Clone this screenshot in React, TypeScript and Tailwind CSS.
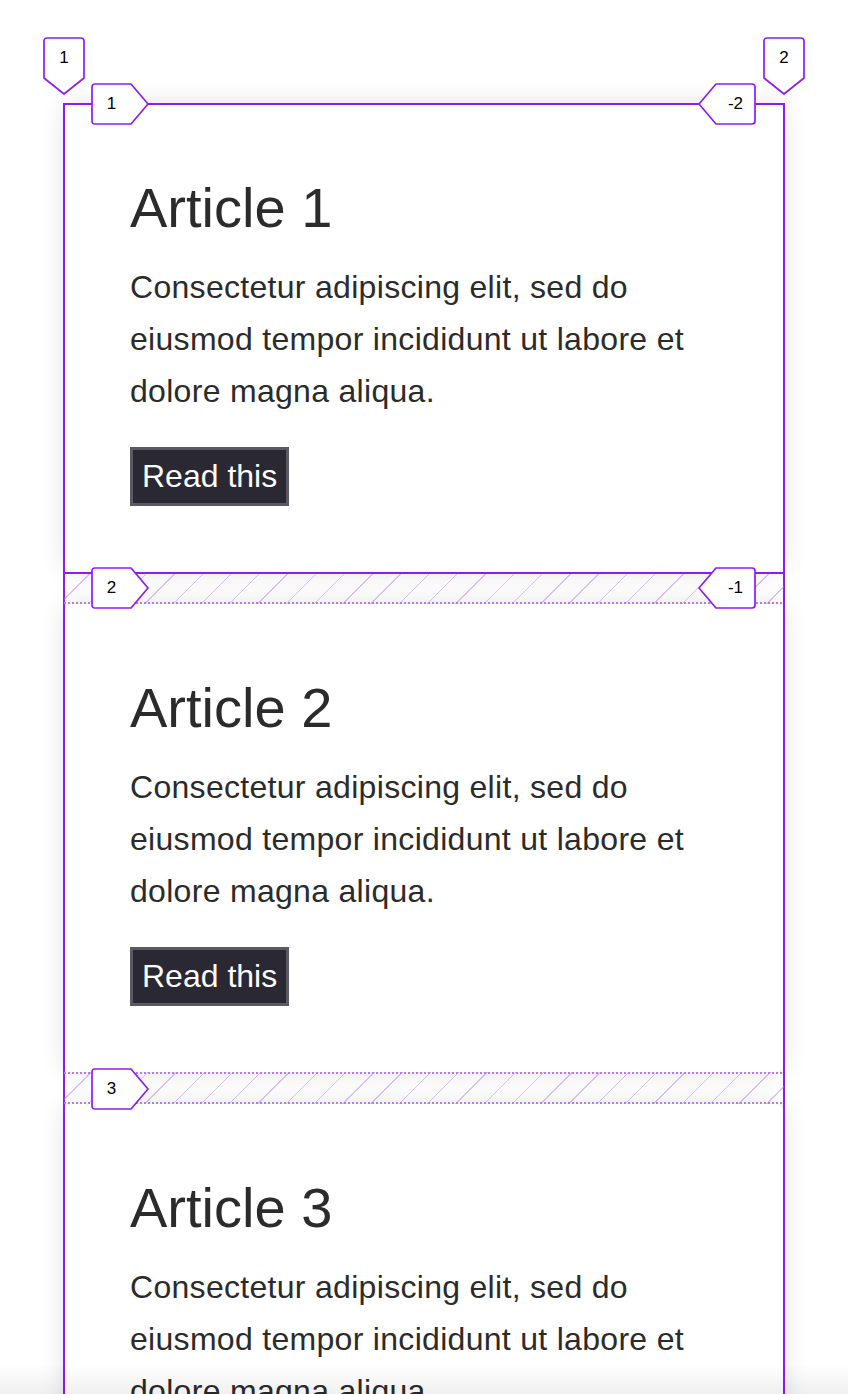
const purple = '#8a1ef2'

const articles = [1, 2, 3]

const Card = ({ n }: { n: number }) => {
  return (
    <div className="bg-white rounded-[10px] shadow-[0_0_24px_rgba(0,0,0,0.12)] h-[468px] pt-[72px] px-[66px] text-[#2b2b2b]">
      <h2 className="text-[56px] leading-[64px]">Article {n}</h2>
      <p className="mt-[21px] text-[32px] leading-[52px] tracking-[0.3px]">
        Consectetur adipiscing elit, sed do eiusmod tempor incididunt ut labore et dolore magna aliqua.
      </p>
      <button className="mt-[30px] bg-[#2a2832] border-[3px] border-[#5b5a63] px-[9px] py-[8px] text-[32px] leading-[37px] text-white">
        Read this
      </button>
    </div>
  )
}

type Dir = 'down' | 'right' | 'left'

const shapes: Record<Dir, { w: number; h: number; d: string; text: string }> = {
  down: { w: 42, h: 58, d: 'M4 1H38Q41 1 41 4V41L21 57L1 41V4Q1 1 4 1Z', text: 'left-0 top-0 w-[42px] h-[41px]' },
  right: { w: 58, h: 42, d: 'M4 1H40L57 21L40 41H4Q1 41 1 38V4Q1 1 4 1Z', text: 'left-0 top-0 w-[41px] h-[42px]' },
  left: { w: 58, h: 42, d: 'M18 1H54Q57 1 57 4V38Q57 41 54 41H18L1 21Z', text: 'left-[17px] top-0 w-[41px] h-[42px]' },
}

const Label = ({ dir, label, className }: { dir: Dir; label: string; className: string }) => {
  const s = shapes[dir]
  return (
    <div className={`absolute ${className}`}>
      <svg width={s.w} height={s.h} viewBox={`0 0 ${s.w} ${s.h}`} className="block">
        <path d={s.d} fill="white" stroke={purple} strokeWidth="1.7" strokeLinejoin="round" />
      </svg>
      <span className={`absolute flex items-center justify-center text-[17px] text-black ${s.text}`}>{label}</span>
    </div>
  )
}

const dotted = 'h-[2px] bg-[repeating-linear-gradient(90deg,#b07cf2_0_2px,transparent_2px_4px)]'
const hatch = 'bg-[repeating-linear-gradient(135deg,transparent_0_19px,rgba(175,120,240,0.45)_19px_20px)]'

const GridOverlay = () => {
  return (
    <div className="absolute inset-0 pointer-events-none">
      <div className="absolute left-[-1px] top-[-1px] bottom-0 w-[2px] bg-[#8a1ef2]" />
      <div className="absolute right-[-1px] top-[-1px] bottom-0 w-[2px] bg-[#8a1ef2]" />
      <div className="absolute left-0 right-0 top-[-1px] h-[2px] bg-[#8a1ef2]" />

      <div className={`absolute left-0 right-0 top-[468px] h-[32px] flex flex-col justify-between ${hatch}`}>
        <div className="h-[2px] bg-[#8a1ef2]" />
        <div className={dotted} />
      </div>
      <div className={`absolute left-0 right-0 top-[968px] h-[32px] flex flex-col justify-between ${hatch}`}>
        <div className={dotted} />
        <div className={dotted} />
      </div>

      <Label dir="down" label="1" className="left-[-21px] top-[-67px]" />
      <Label dir="down" label="2" className="left-[699px] top-[-67px]" />
      <Label dir="right" label="1" className="left-[27px] top-[-21px]" />
      <Label dir="left" label="-2" className="left-[634px] top-[-21px]" />
      <Label dir="right" label="2" className="left-[27px] top-[463px]" />
      <Label dir="left" label="-1" className="left-[634px] top-[463px]" />
      <Label dir="right" label="3" className="left-[27px] top-[964px]" />
    </div>
  )
}

export default function App() {
  return (
    <div className="bg-white h-screen overflow-hidden pt-[104px] font-['Liberation_Sans',Arial,sans-serif]">
      <div className="relative mx-16 w-[720px] grid gap-8">
        {articles.map((n) => (
          <Card key={n} n={n} />
        ))}
        <GridOverlay />
      </div>
      <div className="fixed inset-x-0 bottom-0 h-[30px] bg-linear-to-b from-transparent to-[rgba(0,0,0,0.06)]" />
    </div>
  )
}
